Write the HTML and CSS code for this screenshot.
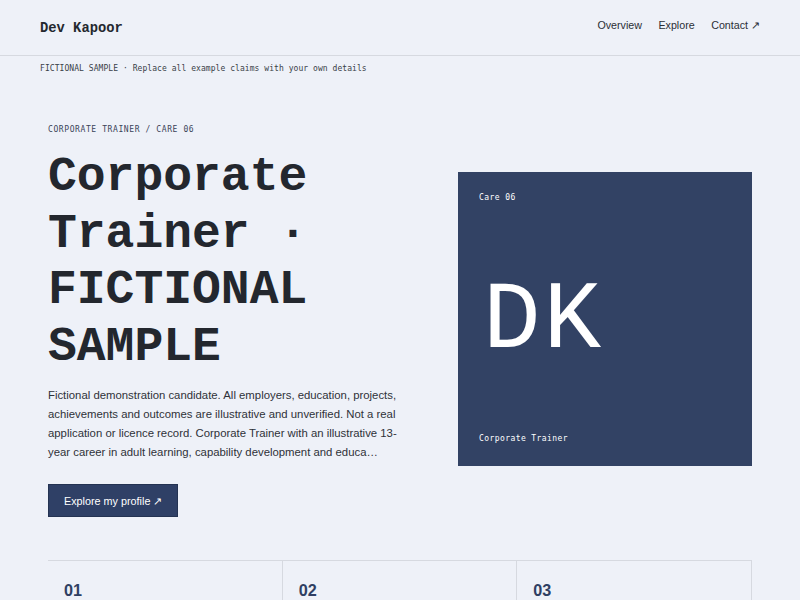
FILE: index.html
```html
<!DOCTYPE html>
<html lang="en">
<head>
<meta charset="utf-8">
<title>Dev Kapoor</title>
<link rel="stylesheet" href="styles.css">
</head>
<body>
<header class="site-header">
  <div class="brand">Dev Kapoor</div>
  <nav class="nav">
    <a href="#">Overview</a>
    <a href="#">Explore</a>
    <a href="#">Contact ↗</a>
  </nav>
</header>
<div class="notice">FICTIONAL SAMPLE · Replace all example claims with your own details</div>
<main class="main">
  <section class="hero">
    <div class="hero-text">
      <div class="eyebrow">CORPORATE TRAINER / CARE 06</div>
      <h1 class="title">Corporate Trainer · FICTIONAL SAMPLE</h1>
      <p class="lead">Fictional demonstration candidate. All employers, education, projects, achievements and outcomes are illustrative and unverified. Not a real application or licence record. Corporate Trainer with an illustrative 13-year career in adult learning, capability development and educa…</p>
      <a class="btn" href="#">Explore my profile ↗</a>
    </div>
    <div class="card">
      <div class="card-label">Care 06</div>
      <div class="card-mono">DK</div>
      <div class="card-label">Corporate Trainer</div>
    </div>
  </section>
  <section class="stats">
    <div class="stat"><span class="stat-num">01</span></div>
    <div class="stat"><span class="stat-num">02</span></div>
    <div class="stat"><span class="stat-num">03</span></div>
  </section>
</main>
</body>
</html>
```

FILE: styles.css
```css
* { box-sizing: border-box; }
html, body { margin: 0; padding: 0; }
body {
  background: #eef1f8;
  color: #24282f;
  font-family: "Liberation Sans", Arial, sans-serif;
  overflow: hidden;
}
a { color: inherit; text-decoration: none; }

.site-header {
  height: 56px;
  border-bottom: 1px solid #d6d9e0;
  display: flex;
  align-items: center;
  justify-content: space-between;
  padding: 0 40px;
}
.brand {
  font-family: "Courier New", "Liberation Mono", Cousine, Courier, monospace;
  font-weight: bold;
  font-size: 13.8px;
  color: #24282f;
  padding-top: 2px;
}
.nav {
  display: flex;
  gap: 16.5px;
  font-size: 10.7px;
  color: #2b2f36;
  margin-top: -4px;
}

.notice {
  font-family: "DejaVu Sans Mono", monospace;
  font-size: 8px;
  letter-spacing: 0.06px;
  color: #3a3f48;
  padding: 8px 40px 0;
  height: 22px;
}

.main {
  padding: 0 48px;
}

.hero {
  display: grid;
  grid-template-columns: 350px 294px;
  justify-content: space-between;
  align-items: center;
  padding-top: 47px;
}
.eyebrow {
  font-family: "DejaVu Sans Mono", monospace;
  font-size: 8px;
  letter-spacing: 0.6px;
  color: #3b4458;
}
.title {
  font-family: "Courier New", "Liberation Mono", Cousine, Courier, monospace;
  font-weight: bold;
  font-size: 48px;
  line-height: 56.5px;
  margin: 15px 0 0;
  color: #23272e;
  width: 300px;
}
.lead {
  font-size: 11.35px;
  line-height: 19px;
  color: #2e3239;
  margin: 11px 0 0;
}
.btn {
  display: inline-block;
  margin-top: 22px;
  background: #2f4066;
  color: #ffffff;
  font-size: 10.8px;
  height: 33px;
  line-height: 33px;
  padding: 0 15px;
  border: 1px solid #243352;
}

.card {
  width: 294px;
  height: 294px;
  background: #324264;
  color: #ffffff;
  padding: 21px 21px 22px;
  display: flex;
  flex-direction: column;
  justify-content: space-between;
  margin-top: -5px;
}
.card-label {
  font-family: "DejaVu Sans Mono", monospace;
  font-size: 8px;
  letter-spacing: 0.42px;
  line-height: 10px;
}
.card-mono {
  font-family: "Courier New", "Liberation Mono", Cousine, Courier, monospace;
  font-size: 96px;
  line-height: 104px;
  letter-spacing: 3px;
  margin-top: 7px;
  margin-left: 4px;
}

.stats {
  display: grid;
  grid-template-columns: repeat(3, 1fr);
  border-top: 1px solid #d6d9e0;
  margin-top: 43px;
}
.stat {
  border-right: 1px solid #d6d9e0;
  padding: 20px 16px;
  height: 120px;
}
.stat-num {
  font-weight: bold;
  font-size: 16.2px;
  color: #2f3f63;
}
```
